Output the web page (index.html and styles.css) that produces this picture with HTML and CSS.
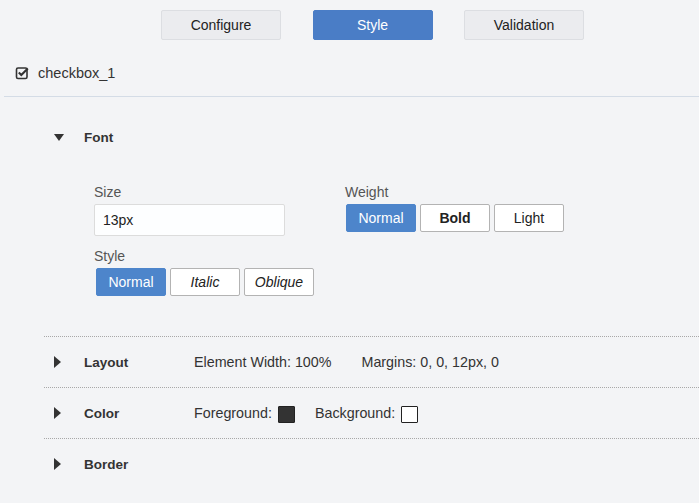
FILE: index.html
```html
<!DOCTYPE html>
<html>
<head>
<meta charset="utf-8">
<link rel="stylesheet" href="styles.css">
</head>
<body>
<nav class="tabs">
  <button class="tab">Configure</button>
  <button class="tab tab-active">Style</button>
  <button class="tab">Validation</button>
</nav>
<header class="element-head">
  <svg class="check-icon" width="15" height="15" viewBox="0 0 15 15">
    <rect x="1.5" y="3" width="10.5" height="10.5" rx="1.5" fill="none" stroke="#333" stroke-width="1.6"/>
    <path d="M3.8 7.6 L6.3 10.1 L12.8 3.4" fill="none" stroke="#333" stroke-width="2.1"/>
  </svg>
  <span class="element-name">checkbox_1</span>
</header>
<main class="sections">
  <section class="sec">
    <div class="sec-head">
      <span class="caret caret-down"></span>
      <span class="sec-title">Font</span>
    </div>
    <div class="font-body">
      <div class="field field-size">
        <label class="field-label">Size</label>
        <div class="text-input">13px</div>
      </div>
      <div class="field field-weight">
        <label class="field-label">Weight</label>
        <div class="btn-group group-weight">
          <button class="opt opt-on">Normal</button>
          <button class="opt opt-bold">Bold</button>
          <button class="opt">Light</button>
        </div>
      </div>
      <div class="field field-style">
        <label class="field-label">Style</label>
        <div class="btn-group group-style">
          <button class="opt opt-on">Normal</button>
          <button class="opt opt-italic">Italic</button>
          <button class="opt opt-italic">Oblique</button>
        </div>
      </div>
    </div>
  </section>
  <section class="sec sec-line">
    <div class="sec-head">
      <span class="caret caret-right"></span>
      <span class="sec-title">Layout</span>
      <span class="summary">
        <span>Element Width: 100%</span>
        <span>Margins: 0, 0, 12px, 0</span>
      </span>
    </div>
  </section>
  <section class="sec sec-line">
    <div class="sec-head">
      <span class="caret caret-right"></span>
      <span class="sec-title">Color</span>
      <span class="summary summary-color">
        <span class="swatch-item">Foreground: <span class="swatch swatch-dark"></span></span>
        <span class="swatch-item">Background: <span class="swatch swatch-light"></span></span>
      </span>
    </div>
  </section>
  <section class="sec sec-line">
    <div class="sec-head">
      <span class="caret caret-right"></span>
      <span class="sec-title">Border</span>
    </div>
  </section>
</main>
</body>
</html>
```
FILE: styles.css
```css
* { box-sizing: border-box; }
html, body { margin: 0; padding: 0; }
body {
  background: #f3f4f6;
  font-family: "Liberation Sans", Arial, sans-serif;
  color: #333;
  font-size: 14px;
  width: 699px;
  height: 503px;
  overflow: hidden;
}
button { font-family: inherit; }

.tabs {
  display: flex;
  gap: 31.5px;
  padding: 10px 0 0 161px;
}
.tab {
  width: 120px;
  height: 30px;
  border: 1px solid #dcdee2;
  border-radius: 2px;
  background: #ebecef;
  color: #222;
  font-size: 14px;
  padding: 0;
}
.tab-active {
  background: #4a7dc6;
  border-color: #4a7dc6;
  color: #fff;
}

.element-head {
  display: flex;
  align-items: center;
  height: 57px;
  padding: 10px 0 0 11px;
  margin-left: 4px;
  border-bottom: 1px solid #d4dce6;
}
.check-icon { display: block; margin-top: -1px; }
.element-name {
  margin-left: 8px;
  font-size: 14.5px;
  color: #333;
}

.sections {
  margin: 15px 0 0 44px;
}
.sec-line { border-top: 1px dotted #a8a8a8; }
.sec-head {
  display: flex;
  align-items: center;
  height: 50px;
  padding-left: 10px;
}
.caret {
  width: 30px;
  flex: none;
  display: flex;
}
.caret::before {
  content: "";
  display: block;
  width: 0;
  height: 0;
}
.caret-down::before {
  border-left: 5.5px solid transparent;
  border-right: 5.5px solid transparent;
  border-top: 7px solid #333;
  margin-top: 1px;
}
.caret-right::before {
  border-top: 6.5px solid transparent;
  border-bottom: 6.5px solid transparent;
  border-left: 7px solid #333;
}
.sec-title {
  width: 110px;
  flex: none;
  font-weight: bold;
  font-size: 13.5px;
  color: #333;
}
.summary {
  display: flex;
  gap: 30px;
  font-size: 14.3px;
  color: #333;
}
.summary-color { gap: 20px; }
.swatch-item {
  display: flex;
  align-items: center;
  gap: 6px;
}
.swatch {
  display: inline-block;
  width: 17px;
  height: 17px;
  border: 1px solid #222;
  border-radius: 1px;
  margin-top: 3px;
}
.swatch-dark { background: #333; }
.swatch-light { background: #fff; }

.font-body {
  display: grid;
  grid-template-columns: 251px auto;
  grid-template-areas: "size weight" "style .";
  row-gap: 12px;
  padding: 22px 0 40px 50px;
}
.field { display: flex; flex-direction: column; gap: 4px; }
.field-size { grid-area: size; }
.field-weight { grid-area: weight; }
.field-style { grid-area: style; }
.field-label {
  line-height: 16px;
  font-size: 14px;
  color: #555;
}
.text-input {
  width: 191px;
  height: 32px;
  border: 1px solid #dcdcdc;
  border-radius: 2px;
  background: #fdfeff;
  padding-left: 8px;
  line-height: 30px;
  font-size: 14px;
  color: #222;
}
.btn-group { display: flex; gap: 4px; }
.group-weight { margin-left: 1px; }
.group-style { margin-left: 2px; }
.opt {
  width: 70px;
  height: 28px;
  border: 1px solid #b3b3b3;
  border-radius: 2px;
  background: #fff;
  color: #222;
  font-size: 14px;
  padding: 0;
}
.opt-on {
  background: #4d85cb;
  border-color: #4d85cb;
  color: #fff;
}
.opt-bold { font-weight: bold; }
.opt-italic { font-style: italic; }
```
